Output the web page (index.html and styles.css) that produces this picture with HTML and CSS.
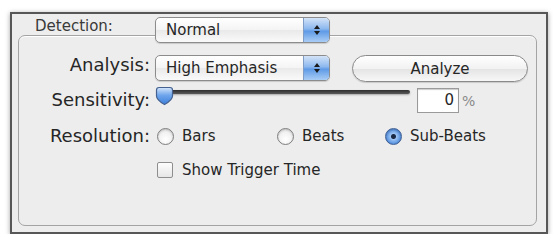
FILE: index.html
```html
<!DOCTYPE html>
<html lang="en">
<head>
    <meta charset="UTF-8">
    <title>Detection Settings</title>
    <link rel="stylesheet" href="styles.css">
</head>
<body>

    <div class="window">
        <!-- Detection popup sits on top of the group box border -->
        <div class="detect-row">
            <span class="detect-label">Detection:</span>
            <div class="popup">
                <span class="popup-text">Normal</span>
                <span class="popup-arrows">
                    <svg width="8" height="12" viewBox="0 0 8 12"><path d="M4 1 L7 5 H1 Z M4 11 L7 7 H1 Z" fill="#1a1a1a"/></svg>
                </span>
            </div>
        </div>

        <div class="group">
            <div class="row row-analysis">
                <span class="lbl">Analysis:</span>
                <div class="popup">
                    <span class="popup-text">High Emphasis</span>
                    <span class="popup-arrows">
                        <svg width="8" height="12" viewBox="0 0 8 12"><path d="M4 1 L7 5 H1 Z M4 11 L7 7 H1 Z" fill="#1a1a1a"/></svg>
                    </span>
                </div>
                <button class="btn">Analyze</button>
            </div>

            <div class="row row-sens">
                <span class="lbl">Sensitivity:</span>
                <div class="slider">
                    <div class="track"></div>
                    <svg class="thumb" width="19" height="20" viewBox="0 0 19 20">
                        <defs>
                            <linearGradient id="thumbFill" x1="0" y1="0" x2="0" y2="1">
                                <stop offset="0" stop-color="#d6e6fb"/>
                                <stop offset="0.45" stop-color="#6fa6ec"/>
                                <stop offset="1" stop-color="#3d7fdc"/>
                            </linearGradient>
                        </defs>
                        <path d="M4 1.5 H15 Q17.5 1.5 17.5 4 V10 Q17.5 14 9.5 18.5 Q1.5 14 1.5 10 V4 Q1.5 1.5 4 1.5 Z" fill="url(#thumbFill)" stroke="#44618f" stroke-width="1.2"/>
                    </svg>
                </div>
                <div class="field">0</div>
                <span class="pct">%</span>
            </div>

            <div class="row row-res">
                <span class="lbl">Resolution:</span>
                <div class="radios">
                    <label class="radio-item"><span class="radio"></span>Bars</label>
                    <label class="radio-item"><span class="radio"></span>Beats</label>
                    <label class="radio-item"><span class="radio checked"></span>Sub-Beats</label>
                </div>
            </div>

            <div class="row row-check">
                <span class="lbl"></span>
                <label class="check-item"><span class="checkbox"></span>Show Trigger Time</label>
            </div>
        </div>
    </div>

</body>
</html>
```

FILE: styles.css
```css
* {
    margin: 0;
    padding: 0;
    box-sizing: border-box;
}

body {
    background: #ffffff;
    font-family: "DejaVu Sans", sans-serif;
    font-size: 15px;
    color: #262626;
}

.window {
    display: flex;
    flex-direction: column;
    margin: 12px 0 0 10px;
    width: 538px;
    height: 222px;
    border: 2px solid #575757;
    background: #ededed;
    box-shadow: 0 1px 5px rgba(0, 0, 0, 0.35);
    padding: 3px 9px 6px 6px;
}

.detect-row {
    display: flex;
    align-items: flex-start;
    height: 26px;
    margin-bottom: -8px;
}

.detect-label {
    width: 120px;
    margin-left: 17px;
    line-height: 18px;
    color: #3a3a3a;
}

/* aqua style popup menu */
.popup {
    position: relative;
    z-index: 1;
    display: flex;
    align-items: center;
    width: 175px;
    height: 26px;
    border: 1px solid #8c8c8c;
    border-radius: 5px;
    background: linear-gradient(#ffffff, #f4f4f4 50%, #e9e9e9 51%, #fafafa);
    box-shadow: 0 1px 1px rgba(0, 0, 0, 0.15);
    overflow: hidden;
}

.popup-text {
    flex: 1;
    padding-left: 10px;
}

.popup-arrows {
    display: flex;
    align-items: center;
    justify-content: center;
    width: 26px;
    height: 100%;
    border-left: 1px solid #7f9cc6;
    background: linear-gradient(#d3e3f8, #8cb8ee 45%, #5e9ae6 55%, #a9cdf6);
}

.group {
    flex: 1;
    border: 1px solid #a4a4a4;
    border-radius: 7px;
    box-shadow: inset 0 1px 0 #ffffff;
    padding-top: 19px;
}

.row {
    display: flex;
    align-items: flex-start;
}

.lbl {
    width: 131px;
    margin-right: 5px;
    text-align: right;
    font-size: 18px;
    line-height: 22px;
}

.row-analysis {
    height: 27px;
}

.row-analysis .lbl {
    margin-top: -1px;
}

.btn {
    width: 176px;
    height: 27px;
    margin-left: 22px;
    border: 1px solid #8a8a8a;
    border-radius: 14px;
    background: linear-gradient(#ffffff, #f2f2f2 50%, #e4e4e4 51%, #f7f7f7);
    box-shadow: 0 1px 1px rgba(0, 0, 0, 0.15);
    font-family: "DejaVu Sans", sans-serif;
    font-size: 15px;
    color: #262626;
}

.row-sens {
    height: 31px;
    margin-top: 5px;
}

.row-sens .lbl {
    margin-top: 2px;
}

.slider {
    position: relative;
    width: 255px;
    height: 24px;
}

.track {
    margin: 3px 0 0 5px;
    height: 4px;
    background: linear-gradient(#2e2e2e, #5a5a5a);
    border-radius: 2px;
    box-shadow: 0 1px 2px rgba(0, 0, 0, 0.3);
}

.thumb {
    position: absolute;
    left: 0;
    top: -1px;
}

.field {
    width: 42px;
    height: 25px;
    margin: 1px 0 0 7px;
    border: 1px solid #9a9a9a;
    background: #ffffff;
    box-shadow: inset 0 1px 1px rgba(0, 0, 0, 0.2);
    text-align: right;
    padding-right: 4px;
    line-height: 23px;
}

.pct {
    margin: 3px 0 0 3px;
    color: #8a8a8a;
    font-size: 14px;
    line-height: 22px;
}

.row-res {
    height: 34px;
    margin-top: 7px;
}

.radios {
    display: grid;
    grid-template-columns: 120px 108px auto;
    margin-left: 2px;
}

.radio-item, .check-item {
    display: flex;
    align-items: center;
    height: 22px;
}

.radio {
    width: 17px;
    height: 17px;
    margin-right: 8px;
    border: 1px solid #7e7e7e;
    border-radius: 50%;
    background: radial-gradient(circle at 50% 70%, #ffffff, #e6e6e6);
    box-shadow: inset 0 1px 2px rgba(0, 0, 0, 0.2);
}

.radio.checked {
    border-color: #3e5f93;
    background: radial-gradient(circle, #1b2a44 0 2px, #9cc4f3 3px, #5d96e2 7px, #3c6fc1 9px);
}

.row-check {
    height: 22px;
}

.check-item {
    margin-left: 2px;
}

.checkbox {
    width: 16px;
    height: 16px;
    margin-right: 9px;
    border: 1px solid #8e8e8e;
    border-radius: 2px;
    background: linear-gradient(#fdfdfd, #e6e6e6);
}
```
